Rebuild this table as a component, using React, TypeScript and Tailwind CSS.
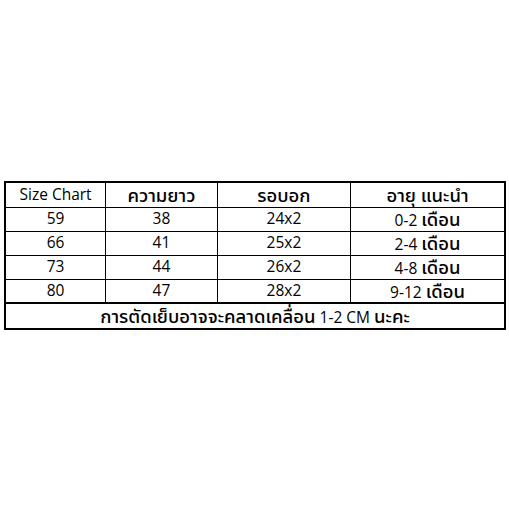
const rows = [
  ["59", "38", "24x2", "0-2 ", "เดือน"],
  ["66", "41", "25x2", "2-4 ", "เดือน"],
  ["73", "44", "26x2", "4-8 ", "เดือน"],
  ["80", "47", "28x2", "9-12 ", "เดือน"],
];

const Th = ({ children }: { children: React.ReactNode }) => (
  <span className="font-medium text-[18.5px]">{children}</span>
);

const App = () => {
  return (
    <div
      className="w-[509px] h-[509px] bg-white pt-[181px] pl-[4px] text-black"
      style={{ fontFamily: '"Open Sans", "Noto Sans", "Noto Sans Thai", sans-serif' }}
    >
      <table className="w-[502px] border-collapse border-2 border-black text-[15.5px] leading-none">
        <colgroup>
          <col className="w-[101px]" />
          <col className="w-[112px]" />
          <col className="w-[134px]" />
          <col className="w-[155px]" />
        </colgroup>
        <thead>
          <tr className="h-[25px]">
            <th className="border border-black font-normal">Size Chart</th>
            <th className="border border-black font-normal">
              <Th>ความยาว</Th>
            </th>
            <th className="border border-black font-normal">
              <Th>รอบอก</Th>
            </th>
            <th className="border border-black font-normal">
              <Th>อายุ แนะนำ</Th>
            </th>
          </tr>
        </thead>
        <tbody>
          {rows.map((r, i) => (
            <tr key={i} className="h-[24px]">
              <td className="border border-black text-center">{r[0]}</td>
              <td className="border border-black text-center">{r[1]}</td>
              <td className="border border-black text-center">{r[2]}</td>
              <td className="border border-black text-center">
                {r[3]}
                <Th>{r[4]}</Th>
              </td>
            </tr>
          ))}
          <tr className="h-[26px]">
            <td colSpan={4} className="border-t-2 border-black text-center">
              <Th>การตัดเย็บอาจจะคลาดเคลื่อน</Th> 1-2 CM <Th>นะคะ</Th>
            </td>
          </tr>
        </tbody>
      </table>
    </div>
  );
};

export default App;
